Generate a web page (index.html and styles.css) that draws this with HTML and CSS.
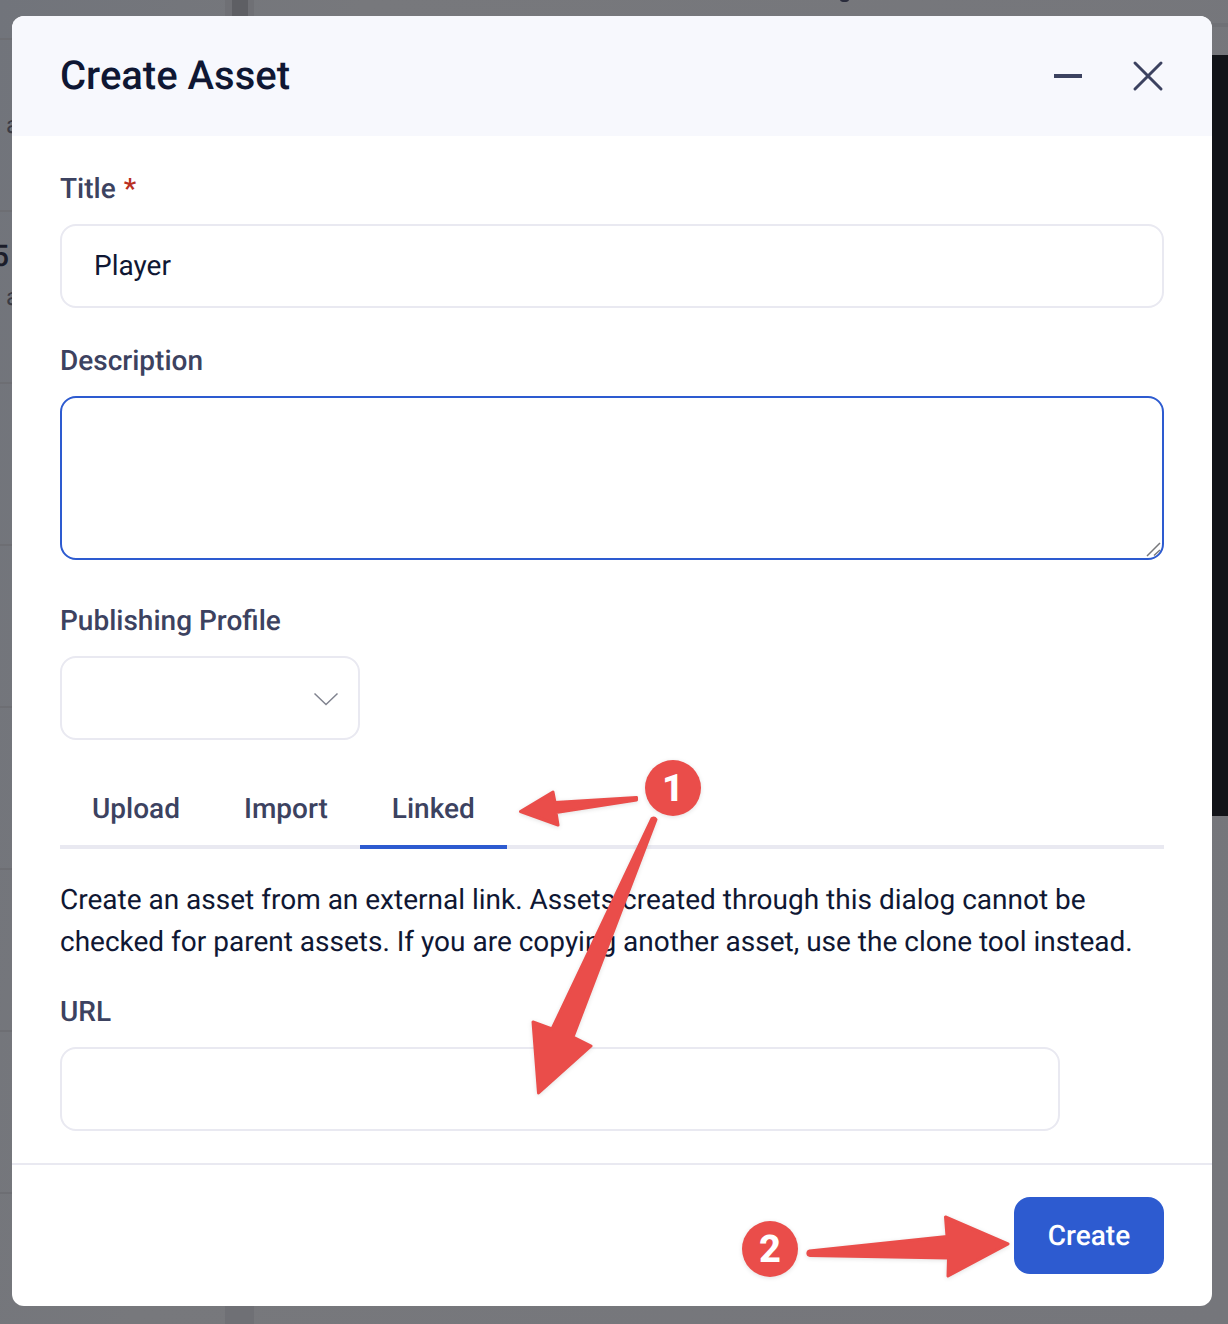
FILE: index.html
```html
<!DOCTYPE html>
<html lang="en">
<head>
<meta charset="utf-8">
<title>Create Asset</title>
<link rel="stylesheet" href="styles.css">
</head>
<body>
<div class="backdrop">
  <div class="bg-bar"></div>
  <div class="bg-bar-inner"></div>
  <div class="bg-dot"></div>
  <div class="bg-strip"></div>
  <div class="bg-panel"></div>
  <div class="bg-line l1"></div>
  <div class="bg-line l2"></div>
  <div class="bg-line l3"></div>
  <div class="bg-line l4"></div>
  <div class="bg-line l5"></div>
  <div class="bg-line l6"></div>
  <div class="bg-line l7"></div>
  <div class="bg-line l8"></div>
  <span class="bg-text t1">a</span>
  <span class="bg-text t2">a</span>
  <span class="bg-num">5</span>
</div>
<main class="modal">
  <header class="modal-header">
    <h1 class="modal-title">Create Asset</h1>
    <div class="modal-actions">
      <svg class="icon-min" width="32" height="32" viewBox="0 0 32 32"><path d="M2 16H30" stroke="#3c4260" stroke-width="4"/></svg>
      <svg class="icon-close" width="32" height="32" viewBox="0 0 32 32"><path d="M3 3L29 29M29 3L3 29" stroke="#3c4260" stroke-width="3" stroke-linecap="round"/></svg>
    </div>
  </header>
  <div class="modal-body">
    <label class="field-label">Title <span class="req">*</span></label>
    <input class="input" type="text" value="Player">
    <label class="field-label gap-a">Description</label>
    <div class="textarea-wrap">
      <textarea class="textarea"></textarea>
      <svg class="grip" width="20" height="20" viewBox="0 0 20 20"><path d="M4 17L17 4M11 16.500L17 11" fill="none" stroke="#77787c" stroke-width="1.500"/></svg>
    </div>
    <label class="field-label gap-b">Publishing Profile</label>
    <div class="select">
      <svg width="26" height="16" viewBox="0 0 26 16"><path d="M1.500 2.500L13 13.500L24.500 2.500" fill="none" stroke="#80838f" stroke-width="1.500"/></svg>
    </div>
    <nav class="tabs">
      <span class="tab">Upload</span>
      <span class="tab">Import</span>
      <span class="tab active">Linked</span>
    </nav>
    <p class="help">Create an asset from an external link. Assets created through this dialog cannot be checked for parent assets. If you are copying another asset, use the clone tool instead.</p>
    <label class="field-label gap-c">URL</label>
    <input class="input url" type="text">
  </div>
  <footer class="modal-footer">
    <button class="btn-primary" type="button">Create</button>
  </footer>
</main>
<svg class="annotations" width="1228" height="1324" viewBox="0 0 1228 1324">
  <g class="arrows" fill="#ea4d4a" stroke="#ea4d4a" stroke-width="3" stroke-linejoin="round">
    <path d="M636.500 797.500L636.500 800L556 812.500L558 825L520.500 811.500L553 792L555 802.500Z"/>
    <path d="M652 818.500A3 3 0 0 1 656 819.500L573 1037L591 1046L538.500 1093L533 1022L552 1029Z"/>
    <path d="M809.500 1251L947 1236.500L945.500 1217L1008 1244L948 1276L948.500 1258L810 1255.500A2.300 2.300 0 0 1 809.500 1251Z"/>
  </g>
  <circle class="badge" cx="673" cy="788" r="28"/>
  <circle class="badge" cx="770" cy="1249" r="28"/>
  <text class="badge-num" x="673" y="801">1</text>
  <text class="badge-num" x="770" y="1262">2</text>
</svg>
</body>
</html>
```
FILE: styles.css
```css
* { box-sizing: border-box; }
html, body { margin: 0; height: 100%; }
body {
  width: 1228px;
  height: 1324px;
  padding: 16px 16px 18px 12px;
  background: linear-gradient(100deg, #71747b 0%, #77787c 25%, #75767b 100%);
  font-family: Roboto, "Liberation Sans", sans-serif;
  text-rendering: geometricPrecision;
  position: relative;
  overflow: hidden;
}
.backdrop { position: absolute; inset: 0; overflow: hidden; }
.bg-bar { position: absolute; left: 225px; top: 0; width: 29px; height: 1324px; background: #6f7075; }
.bg-bar-inner { position: absolute; left: 232px; top: 0; width: 16px; height: 20px; background: #5e5f64; }
.bg-dot { position: absolute; left: 840px; top: -3px; width: 9px; height: 5px; border-radius: 50%; background: #2a2c3c; }
.bg-strip { position: absolute; left: 1212px; top: 23px; width: 16px; height: 4px; background: #6f7075; }
.bg-panel { position: absolute; left: 1212px; top: 55px; width: 16px; height: 761px; background: #111318; }
.bg-line { position: absolute; left: 0; width: 12px; height: 2px; background: #6d6e73; }
.l1 { top: 38px; }
.l2 { top: 210px; }
.l3 { top: 382px; }
.l4 { top: 544px; }
.l5 { top: 706px; }
.l6 { top: 868px; }
.l7 { top: 1030px; }
.l8 { top: 1192px; }
.bg-text { position: absolute; left: 6px; font-size: 24px; line-height: 28px; color: #3a3b44; }
.t1 { top: 111px; }
.t2 { top: 283px; }
.bg-num { position: absolute; left: -8px; top: 240px; font-size: 30px; line-height: 34px; color: #1b1d2a; font-weight: 500; }

.modal {
  position: relative;
  width: 1200px;
  height: 1290px;
  background: #fff;
  border-radius: 12px;
  overflow: hidden;
  display: flex;
  flex-direction: column;
}
.modal-header {
  height: 120px;
  flex: none;
  background: #f7f8fd;
  padding: 0 48px;
  display: flex;
  align-items: center;
  justify-content: space-between;
}
.modal-title { margin: 0; font-size: 40px; line-height: 48px; font-weight: 500; color: #0f1733; }
.modal-actions { display: flex; gap: 48px; }
.modal-actions svg { display: block; }

.modal-body { flex: 1; padding: 32px 48px 0; display: flex; flex-direction: column; align-items: flex-start; }
.field-label { display: block; font-size: 28px; line-height: 42px; font-weight: 500; color: #3c4260; margin-bottom: 14px; }
.req { color: #b9301f; margin-left: 1px; }
.gap-a { margin-top: 32px; }
.gap-b { margin-top: 40px; }
.gap-c { margin-top: 28px; }
.input {
  display: block;
  width: 1104px;
  height: 84px;
  padding: 0 32px 2px;
  border: 2px solid #e9e9f1;
  border-radius: 16px;
  background: #fff;
  font: 400 28px Roboto, "Liberation Sans", sans-serif;
  text-rendering: geometricPrecision;
  color: #0f1733;
  outline: none;
}
.input.url { width: 1000px; }
.textarea-wrap { position: relative; width: 1104px; height: 164px; }
.textarea {
  display: block;
  width: 100%;
  height: 100%;
  padding: 16px 32px;
  border: 2px solid #2d5bd0;
  border-radius: 16px;
  background: #fff;
  outline: none;
  resize: none;
  font: 400 28px Roboto, "Liberation Sans", sans-serif;
}
.grip { position: absolute; right: 1px; bottom: 1px; display: block; }
.select {
  width: 300px;
  height: 84px;
  border: 2px solid #e9e9f1;
  border-radius: 16px;
  display: flex;
  align-items: center;
  justify-content: flex-end;
  padding: 2px 19px 0 0;
}
.select svg { display: block; }
.tabs {
  width: 1104px;
  margin-top: 13px;
  height: 96px;
  display: flex;
  border-bottom: 4px solid #e9e9f1;
}
.tab {
  height: 96px;
  padding: 18px 32px 0;
  display: flex;
  align-items: center;
  font-size: 28px;
  font-weight: 500;
  color: #3c4260;
  border-bottom: 4px solid transparent;
}
.tab.active { border-bottom-color: #2d5bd0; }
.help { margin: 29px 0 0; padding-top: 1px; font-size: 28px; line-height: 42px; color: #0f1733; width: 1104px; }

.modal-footer {
  flex: none;
  height: 143px;
  border-top: 2px solid #e9e9f1;
  padding: 32px 48px 0;
  display: flex;
  justify-content: flex-end;
  align-items: flex-start;
}
.btn-primary {
  width: 150px;
  height: 77px;
  border: 0;
  border-radius: 16px;
  background: #2d5bd0;
  color: #fff;
  font: 500 28px Roboto, "Liberation Sans", sans-serif;
  text-rendering: geometricPrecision;
}

.annotations { position: absolute; left: 0; top: 0; pointer-events: none; }
.arrows { filter: drop-shadow(0 1px 2px rgba(0, 0, 0, .12)); }
.badge { fill: #ea4d4a; filter: drop-shadow(0 1px 2px rgba(0, 0, 0, .12)); }
.badge-num { font: 800 38px Roboto, "Liberation Sans", sans-serif; fill: #fff; text-anchor: middle; }
```
